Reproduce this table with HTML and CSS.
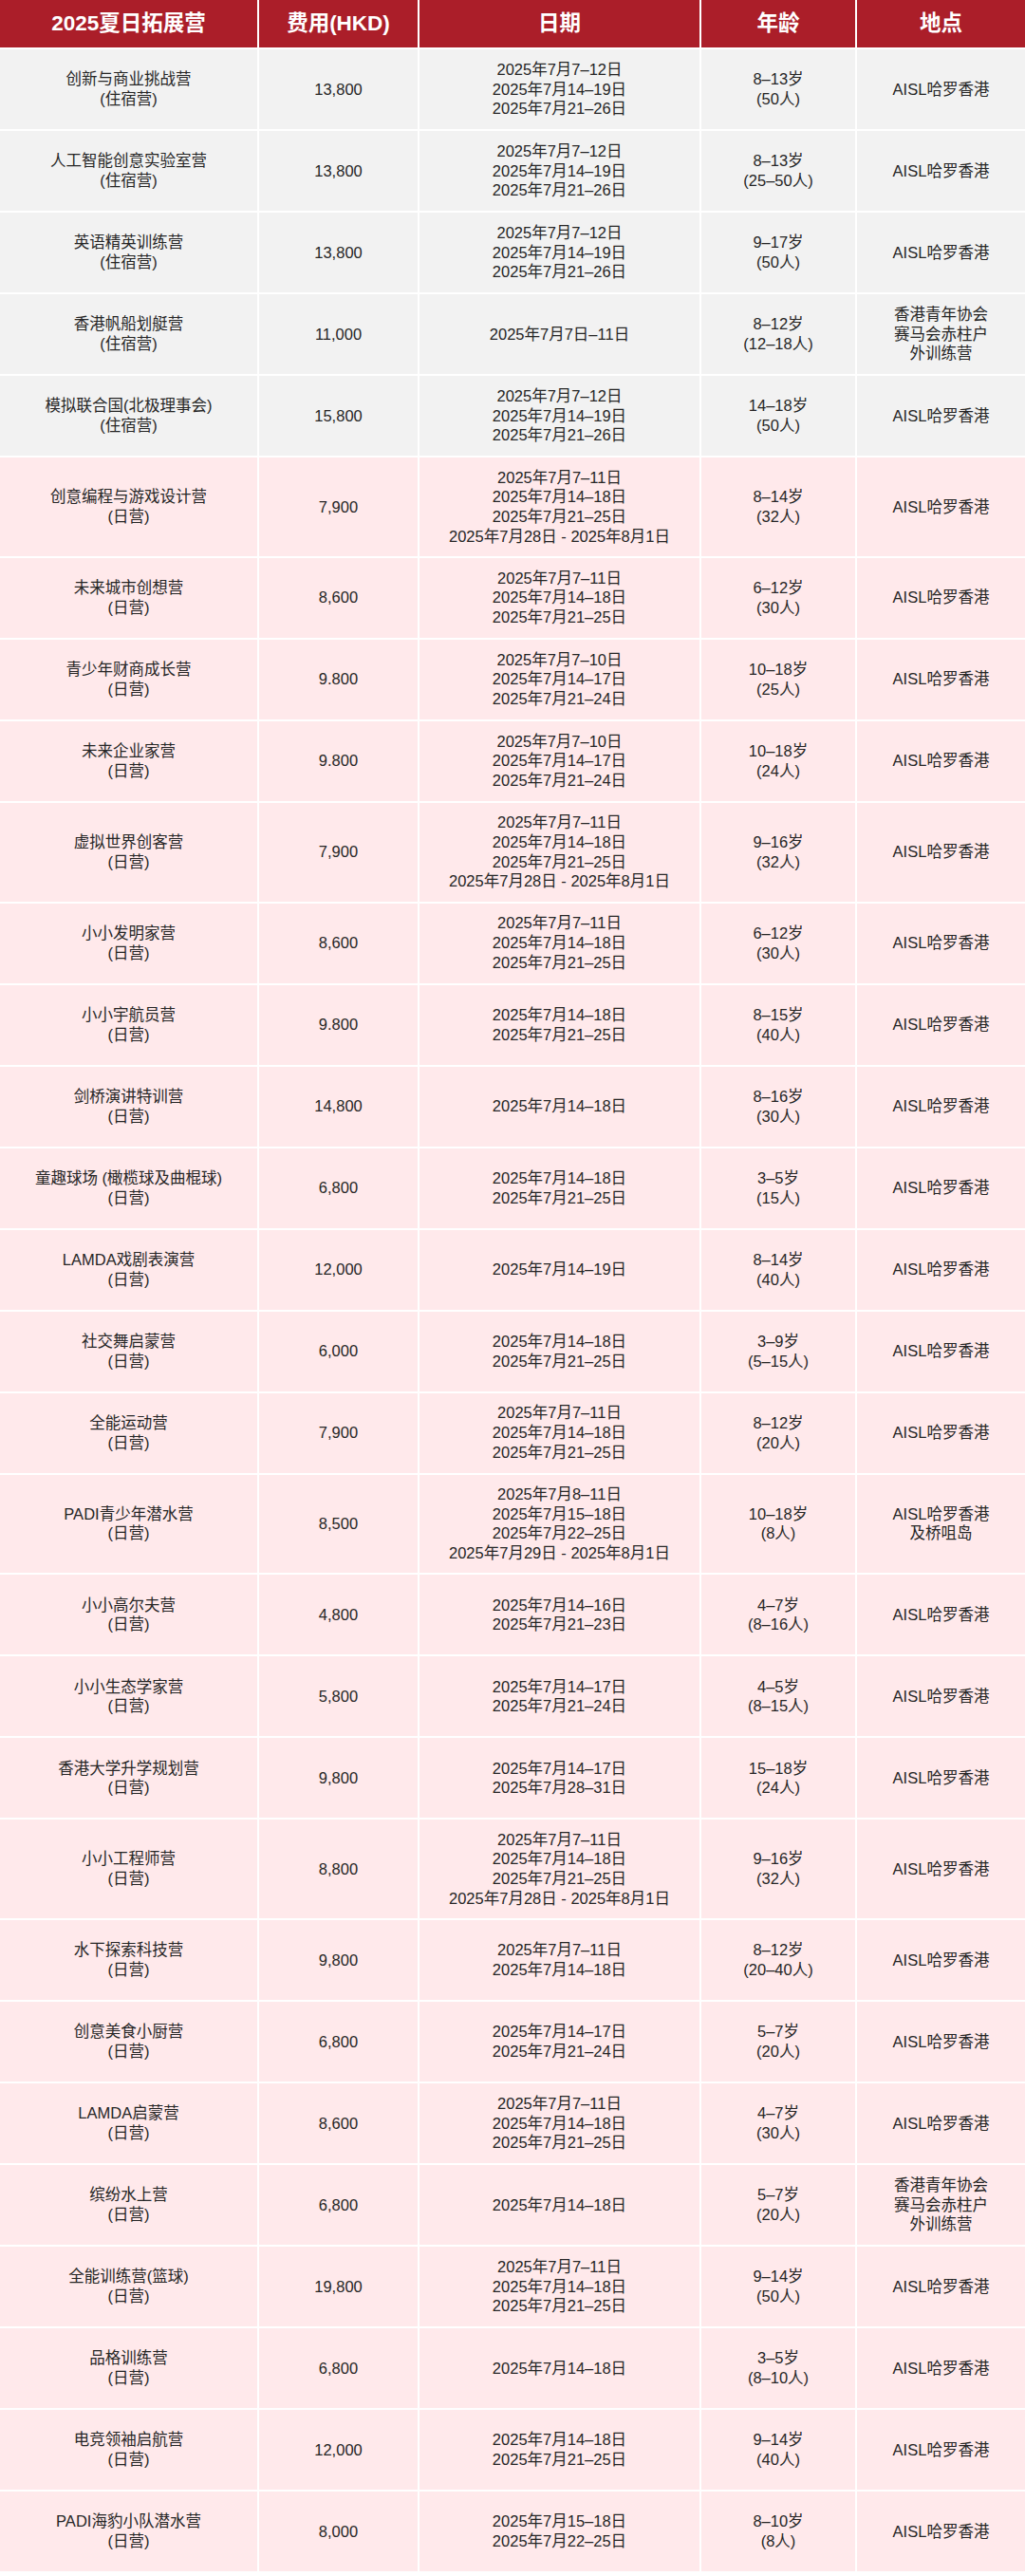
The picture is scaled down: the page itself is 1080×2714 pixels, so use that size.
FILE: index.html
```html
<!DOCTYPE html>
<html lang="zh-CN">
<head>
<meta charset="utf-8">
<title>2025夏日拓展营</title>
<link rel="stylesheet" href="styles.css">
</head>
<body>
<div class="table">
  <div class="row head">
    <div>2025夏日拓展营</div><div>费用(HKD)</div><div>日期</div><div>年龄</div><div>地点</div>
  </div>

  <div class="row g"><div><span>创新与商业挑战营</span><span>(住宿营)</span></div><div><span>13,800</span></div><div><span>2025年7月7–12日</span><span>2025年7月14–19日</span><span>2025年7月21–26日</span></div><div><span>8–13岁</span><span>(50人)</span></div><div><span>AISL哈罗香港</span></div></div>
  <div class="row g"><div><span>人工智能创意实验室营</span><span>(住宿营)</span></div><div><span>13,800</span></div><div><span>2025年7月7–12日</span><span>2025年7月14–19日</span><span>2025年7月21–26日</span></div><div><span>8–13岁</span><span>(25–50人)</span></div><div><span>AISL哈罗香港</span></div></div>
  <div class="row g"><div><span>英语精英训练营</span><span>(住宿营)</span></div><div><span>13,800</span></div><div><span>2025年7月7–12日</span><span>2025年7月14–19日</span><span>2025年7月21–26日</span></div><div><span>9–17岁</span><span>(50人)</span></div><div><span>AISL哈罗香港</span></div></div>
  <div class="row g"><div><span>香港帆船划艇营</span><span>(住宿营)</span></div><div><span>11,000</span></div><div><span>2025年7月7日–11日</span></div><div><span>8–12岁</span><span>(12–18人)</span></div><div><span>香港青年协会</span><span>赛马会赤柱户</span><span>外训练营</span></div></div>
  <div class="row g"><div><span>模拟联合国(北极理事会)</span><span>(住宿营)</span></div><div><span>15,800</span></div><div><span>2025年7月7–12日</span><span>2025年7月14–19日</span><span>2025年7月21–26日</span></div><div><span>14–18岁</span><span>(50人)</span></div><div><span>AISL哈罗香港</span></div></div>

  <div class="row p"><div><span>创意编程与游戏设计营</span><span>(日营)</span></div><div><span>7,900</span></div><div><span>2025年7月7–11日</span><span>2025年7月14–18日</span><span>2025年7月21–25日</span><span>2025年7月28日 - 2025年8月1日</span></div><div><span>8–14岁</span><span>(32人)</span></div><div><span>AISL哈罗香港</span></div></div>
  <div class="row p"><div><span>未来城市创想营</span><span>(日营)</span></div><div><span>8,600</span></div><div><span>2025年7月7–11日</span><span>2025年7月14–18日</span><span>2025年7月21–25日</span></div><div><span>6–12岁</span><span>(30人)</span></div><div><span>AISL哈罗香港</span></div></div>
  <div class="row p"><div><span>青少年财商成长营</span><span>(日营)</span></div><div><span>9.800</span></div><div><span>2025年7月7–10日</span><span>2025年7月14–17日</span><span>2025年7月21–24日</span></div><div><span>10–18岁</span><span>(25人)</span></div><div><span>AISL哈罗香港</span></div></div>
  <div class="row p"><div><span>未来企业家营</span><span>(日营)</span></div><div><span>9.800</span></div><div><span>2025年7月7–10日</span><span>2025年7月14–17日</span><span>2025年7月21–24日</span></div><div><span>10–18岁</span><span>(24人)</span></div><div><span>AISL哈罗香港</span></div></div>
  <div class="row p"><div><span>虚拟世界创客营</span><span>(日营)</span></div><div><span>7,900</span></div><div><span>2025年7月7–11日</span><span>2025年7月14–18日</span><span>2025年7月21–25日</span><span>2025年7月28日 - 2025年8月1日</span></div><div><span>9–16岁</span><span>(32人)</span></div><div><span>AISL哈罗香港</span></div></div>
  <div class="row p"><div><span>小小发明家营</span><span>(日营)</span></div><div><span>8,600</span></div><div><span>2025年7月7–11日</span><span>2025年7月14–18日</span><span>2025年7月21–25日</span></div><div><span>6–12岁</span><span>(30人)</span></div><div><span>AISL哈罗香港</span></div></div>
  <div class="row p"><div><span>小小宇航员营</span><span>(日营)</span></div><div><span>9.800</span></div><div><span>2025年7月14–18日</span><span>2025年7月21–25日</span></div><div><span>8–15岁</span><span>(40人)</span></div><div><span>AISL哈罗香港</span></div></div>
  <div class="row p"><div><span>剑桥演讲特训营</span><span>(日营)</span></div><div><span>14,800</span></div><div><span>2025年7月14–18日</span></div><div><span>8–16岁</span><span>(30人)</span></div><div><span>AISL哈罗香港</span></div></div>
  <div class="row p"><div><span>童趣球场 (橄榄球及曲棍球)</span><span>(日营)</span></div><div><span>6,800</span></div><div><span>2025年7月14–18日</span><span>2025年7月21–25日</span></div><div><span>3–5岁</span><span>(15人)</span></div><div><span>AISL哈罗香港</span></div></div>
  <div class="row p"><div><span>LAMDA戏剧表演营</span><span>(日营)</span></div><div><span>12,000</span></div><div><span>2025年7月14–19日</span></div><div><span>8–14岁</span><span>(40人)</span></div><div><span>AISL哈罗香港</span></div></div>
  <div class="row p"><div><span>社交舞启蒙营</span><span>(日营)</span></div><div><span>6,000</span></div><div><span>2025年7月14–18日</span><span>2025年7月21–25日</span></div><div><span>3–9岁</span><span>(5–15人)</span></div><div><span>AISL哈罗香港</span></div></div>
  <div class="row p"><div><span>全能运动营</span><span>(日营)</span></div><div><span>7,900</span></div><div><span>2025年7月7–11日</span><span>2025年7月14–18日</span><span>2025年7月21–25日</span></div><div><span>8–12岁</span><span>(20人)</span></div><div><span>AISL哈罗香港</span></div></div>
  <div class="row p"><div><span>PADI青少年潜水营</span><span>(日营)</span></div><div><span>8,500</span></div><div><span>2025年7月8–11日</span><span>2025年7月15–18日</span><span>2025年7月22–25日</span><span>2025年7月29日 - 2025年8月1日</span></div><div><span>10–18岁</span><span>(8人)</span></div><div><span>AISL哈罗香港</span><span>及桥咀岛</span></div></div>
  <div class="row p"><div><span>小小高尔夫营</span><span>(日营)</span></div><div><span>4,800</span></div><div><span>2025年7月14–16日</span><span>2025年7月21–23日</span></div><div><span>4–7岁</span><span>(8–16人)</span></div><div><span>AISL哈罗香港</span></div></div>
  <div class="row p"><div><span>小小生态学家营</span><span>(日营)</span></div><div><span>5,800</span></div><div><span>2025年7月14–17日</span><span>2025年7月21–24日</span></div><div><span>4–5岁</span><span>(8–15人)</span></div><div><span>AISL哈罗香港</span></div></div>
  <div class="row p"><div><span>香港大学升学规划营</span><span>(日营)</span></div><div><span>9,800</span></div><div><span>2025年7月14–17日</span><span>2025年7月28–31日</span></div><div><span>15–18岁</span><span>(24人)</span></div><div><span>AISL哈罗香港</span></div></div>
  <div class="row p"><div><span>小小工程师营</span><span>(日营)</span></div><div><span>8,800</span></div><div><span>2025年7月7–11日</span><span>2025年7月14–18日</span><span>2025年7月21–25日</span><span>2025年7月28日 - 2025年8月1日</span></div><div><span>9–16岁</span><span>(32人)</span></div><div><span>AISL哈罗香港</span></div></div>
  <div class="row p"><div><span>水下探索科技营</span><span>(日营)</span></div><div><span>9,800</span></div><div><span>2025年7月7–11日</span><span>2025年7月14–18日</span></div><div><span>8–12岁</span><span>(20–40人)</span></div><div><span>AISL哈罗香港</span></div></div>
  <div class="row p"><div><span>创意美食小厨营</span><span>(日营)</span></div><div><span>6,800</span></div><div><span>2025年7月14–17日</span><span>2025年7月21–24日</span></div><div><span>5–7岁</span><span>(20人)</span></div><div><span>AISL哈罗香港</span></div></div>
  <div class="row p"><div><span>LAMDA启蒙营</span><span>(日营)</span></div><div><span>8,600</span></div><div><span>2025年7月7–11日</span><span>2025年7月14–18日</span><span>2025年7月21–25日</span></div><div><span>4–7岁</span><span>(30人)</span></div><div><span>AISL哈罗香港</span></div></div>
  <div class="row p"><div><span>缤纷水上营</span><span>(日营)</span></div><div><span>6,800</span></div><div><span>2025年7月14–18日</span></div><div><span>5–7岁</span><span>(20人)</span></div><div><span>香港青年协会</span><span>赛马会赤柱户</span><span>外训练营</span></div></div>
  <div class="row p"><div><span>全能训练营(篮球)</span><span>(日营)</span></div><div><span>19,800</span></div><div><span>2025年7月7–11日</span><span>2025年7月14–18日</span><span>2025年7月21–25日</span></div><div><span>9–14岁</span><span>(50人)</span></div><div><span>AISL哈罗香港</span></div></div>
  <div class="row p"><div><span>品格训练营</span><span>(日营)</span></div><div><span>6,800</span></div><div><span>2025年7月14–18日</span></div><div><span>3–5岁</span><span>(8–10人)</span></div><div><span>AISL哈罗香港</span></div></div>
  <div class="row p"><div><span>电竞领袖启航营</span><span>(日营)</span></div><div><span>12,000</span></div><div><span>2025年7月14–18日</span><span>2025年7月21–25日</span></div><div><span>9–14岁</span><span>(40人)</span></div><div><span>AISL哈罗香港</span></div></div>
  <div class="row p"><div><span>PADI海豹小队潜水营</span><span>(日营)</span></div><div><span>8,000</span></div><div><span>2025年7月15–18日</span><span>2025年7月22–25日</span></div><div><span>8–10岁</span><span>(8人)</span></div><div><span>AISL哈罗香港</span></div></div>
</div>
</body>
</html>
```

FILE: styles.css
```css
html, body {
  margin: 0;
  padding: 0;
  background: #ffffff;
}

body {
  font-family: "Liberation Sans", "Noto Sans CJK SC", Arial, sans-serif;
  color: #262626;
}

.table {
  width: 1080px;
  display: flex;
  flex-direction: column;
  gap: 2px;
  background: #ffffff;
}

.row {
  display: grid;
  grid-template-columns: 271px 167px 295px 162px 177px;
  column-gap: 2px;
}

.row > div {
  box-sizing: border-box;
  display: flex;
  flex-direction: column;
  justify-content: center;
  align-items: center;
  text-align: center;
  font-size: 16.5px;
  line-height: 20.7px;
  padding: 10.5px 4px;
  min-height: 84px;
}

.row > div > span {
  display: flex;
  align-items: center;
  justify-content: center;
  height: 20.7px;
  white-space: nowrap;
}

.row.head > div {
  background: #ab1e29;
  color: #ffffff;
  font-weight: 700;
  font-size: 22.5px;
  line-height: 28px;
  min-height: 50px;
  padding: 0 4px;
}

.row.g > div {
  background: #f2f2f2;
}

.row.p > div {
  background: #ffe9eb;
}
```
